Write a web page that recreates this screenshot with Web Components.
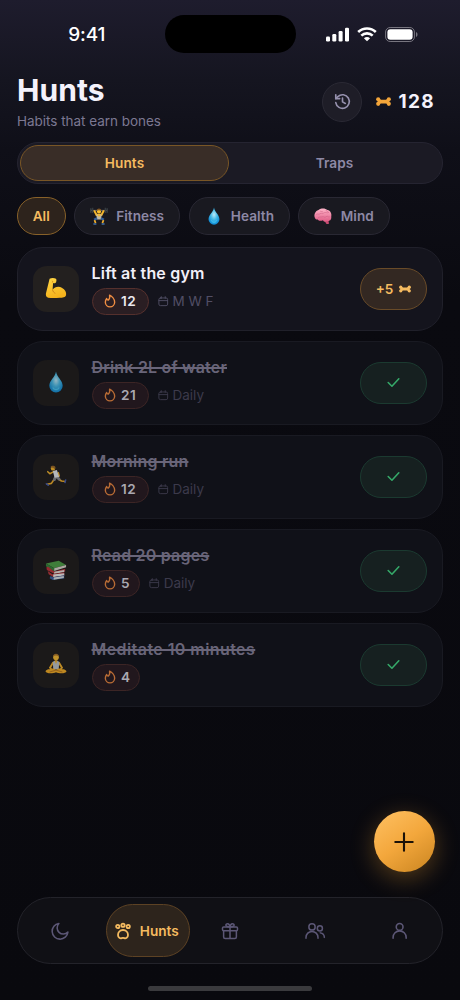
<!DOCTYPE html>
<html lang="en">
<head>
<meta charset="utf-8">
<title>Hunts</title>
<style>
html,body{margin:0;height:100%;background:#09090e}
body{font-family:Inter,"Noto Sans",sans-serif;overflow:hidden}
</style>
</head>
<body>
<hunt-app></hunt-app>
<script>
const stroke = (body, w = 2) => `<g fill="none" stroke="currentColor" stroke-width="${w}" stroke-linecap="round" stroke-linejoin="round">${body}</g>`;
const ICONS = {
  history: stroke('<path d="M2.500 13.500a9.600 9.600 0 1 0 3-8.500L2.500 8"/><path d="M2.500 2.500V8H8M12 7v5.500l4 2.200"/>', 2.3),
  bone: '<g fill="currentColor"><circle cx="3.500" cy="8.300" r="3.300"/><circle cx="3.500" cy="15.700" r="3.300"/><circle cx="20.500" cy="8.300" r="3.300"/><circle cx="20.500" cy="15.700" r="3.300"/><path d="M2.500 8h3.500l2 1h8L18 8h3.500v8H18l-2-1H8L6 16H2.500z"/></g>',
  flame: stroke('<path d="M9 10.500C11.500 8.500 12 5.500 11.300 2c4 1.800 8.700 6.800 8.700 12.200A8 8 0 0 1 12 22a8 8 0 0 1-8-7.800c0-2.400.800-4.700 2.300-6.400.300 1.500 1.200 2.500 2.700 2.700z"/>', 2.400),
  calendar: stroke('<rect x="2" y="4.500" width="20" height="17.500" rx="3.500"/><path d="M2 10.500h20M7.500 1.500v4M16.500 1.500v4"/>', 2.100),
  check: stroke('<path d="M20.500 6 9.500 18l-6-6"/>', 2.500),
  plus: stroke('<path d="M12 2.500v19M2.500 12h19"/>', 2.300),
  moon: stroke('<path d="M10.500 2a8 8 0 0 0 12 11.500A10.500 10.500 0 1 1 10.500 2z"/>', 2.100),
  paw: stroke('<circle cx="4.200" cy="5.200" r="2.500"/><circle cx="12" cy="3.400" r="2.500"/><circle cx="19.800" cy="5.200" r="2.500"/><path d="M12 10.500c-4.700 0-7.500 3.500-7.500 7.500 0 4.300 3.500 5.500 5.500 4.700 1.300-.500 2.700-.500 4 0 2 .800 5.500-.400 5.500-4.700 0-4-2.800-7.500-7.500-7.500z"/>', 2.700),
  gift: stroke('<rect x="2" y="6.500" width="20" height="5" rx="1.500"/><path d="M3.500 11.500V20a2 2 0 0 0 2 2h13a2 2 0 0 0 2-2v-8.500M12 6.500V22M12 6.500C9 6.500 6.500 6 6.500 4S11 .5 12 6.500c1-6 5.500-4.500 5.500-2.500S15 6.500 12 6.500"/>', 2),
  people: stroke('<circle cx="8" cy="6.500" r="4.200"/><path d="M0 21.500v-1a8 8 0 0 1 16 0v1"/><circle cx="18.500" cy="8.500" r="3.400"/><path d="M19 14.500a6.300 6.300 0 0 1 5.500 6"/>', 2),
  person: stroke('<circle cx="11.500" cy="6.500" r="4.500"/><path d="M2.800 21.500v-1a8.700 8.700 0 0 1 17.400 0v1"/>', 2.100),
  drop: '<defs><radialGradient id="d" cx=".5" cy=".42" r=".62"><stop stop-color="#bdebfa"/><stop offset=".45" stop-color="#48bce9"/><stop offset="1" stop-color="#0785d2"/></radialGradient></defs><path fill="url(#d)" d="M12 .5C11 7 4.700 10 4.700 16.200a7.300 7.300 0 0 0 14.600 0C19.300 10 13 7 12 .5z"/><path d="M8.500 18c1 3 6 3 7 0" stroke="#46c8f5" stroke-width="1.300" fill="none"/>',
  arm: '<defs><linearGradient id="a" x2=".3" y2="1"><stop stop-color="#ffd747"/><stop offset="1" stop-color="#f5b31c"/></linearGradient></defs><path fill="url(#a)" d="M5 2c2-1.400 5-1.300 7 0 1 1 .4 4-.600 4.600-1.200.600-2.200.200-2.600-.100l-.500 7.500c2-3 6.500-4.300 10-2.200 3.700 1.800 5.200 5.200 4.700 7.700-.5 2.600-4 3-7 3.200-4.500.3-9 .6-12.500-.2C1 22 .800 20 1 18z"/><path d="M8.300 14c.3 1.800 1.200 3 3 3.800M7.500 4c1 .6 1 1.300.5 2" fill="none" stroke="#cd8218" stroke-width="1"/>',
  lift: '<path d="M1 4.500h22" stroke="#6d7377" stroke-width="1.200"/><path d="M1 1.500v6M3.500 1v7M20.500 1v7M23 1.500v6" stroke="#343a3f" stroke-width="2"/><path d="m5.500 4.500 3.200 6h6.600l3.200-6" fill="none" stroke="#f6b72b" stroke-width="2.700"/><circle cx="12" cy="6" r="2.800" fill="#fbc02d"/><path d="M9 5c0-4 6-4 6 0-2-1-4-1-6 0" fill="#825724"/><path d="M8.500 9.500h7l-.5 7H9z" fill="#c2b9a0"/><path d="M9 9.500h6l-3 3.500z" fill="#f6b72b"/><path d="m9.500 15-4 2" stroke="#315f9e" stroke-width="3.300"/><path d="m14.500 15 4 2" stroke="#315f9e" stroke-width="3.300"/><path d="m6 17.500 1.500 4M18 17.500l-1.500 4" stroke="#f0ae2b" stroke-width="2.200"/><path d="M4.500 22.500h4M15.500 22.500h4" stroke="#3f6da4" stroke-width="2"/>',
  brain: '<defs><linearGradient id="b" x2="0" y2="1"><stop stop-color="#ffb5c9"/><stop offset="1" stop-color="#df5c86"/></linearGradient></defs><path fill="#c84b72" d="M14 17h5l1 5c-2 1.500-4 .5-4.500-1z"/><path fill="url(#b)" d="M1 14C-.5 10 2 5 6 4c4-3 9-2.500 12 0 4 .5 6 5 5 9 .5 4-2 6-6 6-2 1.200-4 .4-5-1.500-3 1.500-6 1-7-.8-2 .4-3.500-.7-4-2.700z"/><path d="M3 10c2-2 3 1 5-1s3 1 5-1 4 1 7-1M5 15c2-3 4-1 6-2s3 2 5 0 3 1 5 0M8 5c1 2 3 0 4 2m4-3c0 2 2 1 3 3" fill="none" stroke="#c8587d" stroke-width=".6"/>',
  run: '<g fill="none" stroke-linecap="round" stroke-linejoin="round"><path d="m10 15.500-3 4.500-4.500 1M15 15.500l3 2 4 .5" stroke="#f1ae27" stroke-width="1.800"/><path d="M9 7.500 5.300 9.500 3 7.300M14.500 8.500l1 3.500-3 1" stroke="#f6b62d" stroke-width="1.700"/><path d="m11.500 13-1.300 3M13 13l2.500 2.500" stroke="#85888c" stroke-width="3"/><path d="m1.500 20.500 2 1.500M22.500 16.500l-.7 2.500" stroke="#3f59ad" stroke-width="1.700"/></g><path d="M8.500 6.500 13 5.500l2.500 7.500-5 1z" fill="#e8edf0"/><circle cx="8.700" cy="3.700" r="2.400" fill="#f8b728"/><path d="M6 2.700C6 .3 11 .3 11.500 3l-1 1.500-1.500-1.500z" fill="#9d6824"/>',
  books: '<path d="m1 5 14-3 8 4.500L10 10z" fill="#4ba045"/><path d="m1 5 9 5v3.500L1 8z" fill="#34813a"/><path d="m10 10 13-3.500V9L10 13z" fill="#ddd8cf"/><path d="m1.500 9 2-.5 6.500 5 12-3v3l-12 2.500-8-4z" fill="#bd3138"/><path d="m10 14 11-2v2.300L10 16z" fill="#e6e3df"/><path d="m3 13 5 3.500 13-2V18L9 19.500l-5-3z" fill="#bf343b"/><path d="m9 17 12-1.500V18L9 19.500z" fill="#f0eeee"/><path d="m6 18.500 3 1.300 12-2v3.500L8.500 23 5 21z" fill="#375d9f"/><path d="m9.500 20.200 11-1.700v2.200L9.500 22.500z" fill="#dce2e6"/>',
  meditate: '<path d="m9 10-3.500 6 2 2.500M15 10l3.500 6-2 2.500" fill="none" stroke="#f4b22a" stroke-width="2"/><path d="M8.500 9.500q3.500-2 7 0L15 18H9z" fill="#bec6ca"/><path d="M10.300 8h3.400L12 12z" fill="#f4b22a"/><path d="M9 16.500c-4 1.500-7 .5-8.500 3.500 1 3 8.500 2.500 11.500 1 3 1.500 10.500 2 11.500-1-1.500-3-4.500-2-8.500-3.500l-3 2z" fill="#f5ad23"/><path d="m5 20.700 7-2 7 2" fill="none" stroke="#a96619" stroke-width=".8"/><circle cx="12" cy="4.700" r="3.100" fill="#f9bc32"/><path d="M8.800 3.800c0-4 6.400-4 6.400 0-2-1.300-4.400-1.300-6.400 0" fill="#a87127"/>'
};
class BaseEl extends HTMLElement {
  connectedCallback() {
    if (this.shadowRoot) return;
    this.attachShadow({mode:'open'}).innerHTML = `<style>*{box-sizing:border-box}${this.css()}</style>${this.html()}`;
  }
  a(n) { return this.getAttribute(n) || ''; }
}
const def = (name, css, html) => customElements.define(name, class extends BaseEl {
  css() { return css; }
  html() { return typeof html === 'function' ? html(this) : html; }
});

def('app-icon', ':host{display:block;flex:none;width:var(--s,20px);height:var(--s,20px)}svg{display:block;width:100%;height:100%;overflow:visible}',
  e => `<svg viewBox="0 0 24 24" aria-hidden="true">${ICONS[e.a('name')]}</svg>`);

def('status-bar', `:host{display:grid;grid-template-columns:1fr 131px 1fr;height:68px;align-items:center;color:#fff}
  .time{font-size:19px;font-weight:550;letter-spacing:-.1px;padding-left:9px;text-align:center}
  .island{height:38px;border-radius:19px;background:#000}
  .sys{display:flex;gap:8px;padding-left:30px;align-items:center}svg{display:block}`,
  `<div class="time">9:41</div><div class="island"></div><div class="sys">
  <svg width="23" height="15" viewBox="0 0 23 15" fill="#fff"><rect y="9.500" width="4" height="5" rx="1.200"/><rect x="6.300" y="7" width="4" height="7.500" rx="1.200"/><rect x="12.600" y="4" width="4" height="10.500" rx="1.200"/><rect x="19" y=".7" width="4" height="13.800" rx="1.200"/></svg>
  <svg width="20" height="15" viewBox="0 0 20 15"><g fill="none" stroke="#fff" stroke-width="2.600"><path d="M1.200 5a12.700 12.700 0 0 1 17.600 0"/><path d="M4.300 8.600a8.300 8.300 0 0 1 11.400 0"/></g><path d="m10 14.300-3.100-3a4.600 4.600 0 0 1 6.200 0z" fill="#fff"/></svg>
  <svg width="33" height="15" viewBox="0 0 33 15"><rect x=".6" y=".5" width="28.800" height="14" rx="4.500" fill="none" stroke="#77757f"/><rect x="2.400" y="2.300" width="25.200" height="10.400" rx="3" fill="#fff"/><path d="M31 5c2 .8 2 4.200 0 5z" fill="#77757f"/></svg></div>`);

def('page-header', `:host{display:flex;justify-content:space-between;padding:0 25px 0 17px;height:74.400px}
  h1{margin:4px 0 0;font-size:30px;line-height:36px;font-weight:700;letter-spacing:.05px;color:#f4f2fb}
  p{margin:4.600px 0 0;font-size:13.500px;line-height:17px;color:#7c7892;letter-spacing:-.03px}
  .right{display:flex;align-items:center;height:40px;margin-top:13.500px}
  .hist{width:40px;height:40px;border-radius:50%;background:#1e1d27;border:1px solid #2a2934;color:#9691ae;display:grid;place-items:center;margin-right:13.500px;--s:17px}
  .bone{color:#f3a53a;--s:15px;margin-right:8px}
  b{font-size:19px;line-height:20px;font-weight:700;letter-spacing:1.300px;color:#f4f2fb}`,
  `<div><h1>Hunts</h1><p>Habits that earn bones</p></div><div class="right"><div class="hist"><app-icon name="history"></app-icon></div><app-icon class="bone" name="bone"></app-icon><b>128</b></div>`);

def('segment-tabs', `:host{display:grid;grid-template-columns:209px 1fr;margin:0 17px;height:42px;padding:2px;border:1px solid #252431;border-radius:21px;background:#1b1a24;font-size:13.600px;font-weight:600;color:#8e89a6}
  div{display:grid;place-items:center;border-radius:18px;letter-spacing:.1px}
  .on{border:1px solid #795626;background:#392d27;color:#f5bb60}`,
  '<div class="on">Hunts</div><div>Traps</div>');

def('filter-chip', `:host{display:flex;align-items:center;height:38px;border-radius:19px;border:1px solid #292833;background:#191920;color:#8d88a5;font-size:13.600px;font-weight:600;gap:8.300px;padding:0 15px;letter-spacing:.04px;--s:18px}
  :host([on]){background:#2d231c;border-color:#886129;color:#f5bb60;padding:0 14.700px}`,
  e => (e.a('icon') ? `<app-icon name="${e.a('icon')}"></app-icon>` : '') + '<slot></slot>');

def('habit-card', `:host{display:flex;align-items:center;height:84px;border:1px solid #20202a;border-radius:26px;background:#14141d;padding:0 15px}
  :host([done]){background:#101118;border-color:#191a22}
  .pic{width:46px;height:46px;border-radius:14px;background:#23201f;display:grid;place-items:center;margin-right:12.500px;padding:0 1px 1px 0;--s:22px}
  :host([done]) .pic{background:#1b1919}
  :host([done]) .pic app-icon{opacity:.75}
  .mid{flex:1;height:52px}
  .t{font-size:16px;line-height:21px;font-weight:600;color:#f1eff8;letter-spacing:var(--ls,.200px);white-space:nowrap;width:max-content}
  :host([done]) .t{color:#696579;text-decoration:line-through;text-decoration-thickness:1.500px}
  .meta{display:flex;gap:9px;align-items:center;margin-top:4px}
  .streak{display:flex;align-items:center;height:27px;border-radius:14px;border:1px solid #55302d;background:#2a1e23;padding:0 9.500px 0 10px;gap:4.500px;color:#f08e43;--s:14px}
  .streak b{font-size:13.600px;font-weight:600;letter-spacing:.500px;color:#eae8ef;box-sizing:border-box;width:17.500px}
  .streak.one b{width:8.700px;letter-spacing:0}
  :host([done]) .streak{background:#21171d;border-color:#3c2525;color:#b96c35}
  :host([done]) .streak b{color:#aaa8b1}
  .when{display:flex;align-items:center;gap:4px;font-size:13.500px;color:#514e65;--s:10.500px}
  :host([done]) .when{color:#3c3a4b}
  .act{width:67px;height:42px;border-radius:21px;border:1px solid #694b28;background:#332822;color:#f5bb60;display:flex;align-items:center;justify-content:center;gap:6px;font-size:13.600px;font-weight:600;--s:12px}
  :host([done]) .act{background:#162020;border-color:#1b3a30;color:#35a969;--s:15px}`,
  e => `<div class="pic"><app-icon name="${e.a('icon')}"></app-icon></div><div class="mid"><div class="t"><slot></slot></div><div class="meta"><div class="streak${e.a('streak').length < 2 ? ' one' : ''}"><app-icon name="flame"></app-icon><b>${e.a('streak')}</b></div>${e.a('when') ? `<div class="when"><app-icon name="calendar"></app-icon><span>${e.a('when')}</span></div>` : ''}</div></div><div class="act">${e.hasAttribute('done') ? '<app-icon name="check"></app-icon>' : '<span>+5</span><app-icon name="bone"></app-icon>'}</div>`);

def('add-button', `:host{position:absolute;left:374px;top:811px;width:61px;height:61px;border-radius:50%;background:linear-gradient(145deg,#ffc163,#f3a73c 50%,#c98420);box-shadow:0 6px 24px rgba(245,166,50,.32);color:#1c1208;display:grid;place-items:center;padding:0 1px 0 0;box-sizing:border-box;--s:22px}`,
  '<app-icon name="plus"></app-icon>');

def('nav-bar', `:host{display:grid;grid-template-columns:repeat(5,minmax(0,1fr));margin:0 17px;height:67px;border:1px solid #23232a;border-radius:34px;background:#101015;color:#5c5776;align-items:center;justify-items:center;--s:18px}
  .on{display:flex;align-items:center;justify-content:center;gap:8.500px;width:84px;height:53px;margin:0 -2.800px 0 2.800px;padding-right:2px;border-radius:27px;border:1px solid #5d4224;background:#2d241c;color:#f5bb60;font-size:13.600px;font-weight:600;--s:16px}`,
  '<app-icon name="moon"></app-icon><div class="on"><app-icon name="paw"></app-icon><span>Hunts</span></div><app-icon name="gift"></app-icon><app-icon name="people"></app-icon><app-icon name="person"></app-icon>');

def('hunt-app', `:host{display:flex;flex-direction:column;width:460px;height:1000px;position:relative;overflow:hidden;background:linear-gradient(180deg,#1e1c2d 0,#151520 80px,#0f0f18 150px,#0a0a10 300px,#09090e 100%)}
  .chips{display:flex;gap:8.400px;margin:12.600px 17px 12px}
  .list{display:flex;flex-direction:column;gap:10px;margin:0 17px;flex:1}
  .home{width:164px;height:5px;border-radius:3px;background:#3a3a3d;margin:22px auto 9px}`,
  `<status-bar></status-bar><page-header></page-header><segment-tabs></segment-tabs>
  <div class="chips"><filter-chip on>All</filter-chip><filter-chip icon="lift">Fitness</filter-chip><filter-chip icon="drop">Health</filter-chip><filter-chip icon="brain">Mind</filter-chip></div>
  <div class="list">
  <habit-card icon="arm" streak="12" when="M W F">Lift at the gym</habit-card>
  <habit-card done icon="drop" streak="21" when="Daily">Drink 2L of water</habit-card>
  <habit-card done icon="run" streak="12" when="Daily">Morning run</habit-card>
  <habit-card done icon="books" streak="5" when="Daily">Read 20 pages</habit-card>
  <habit-card done icon="meditate" streak="4" style="--ls:.430px">Meditate 10 minutes</habit-card></div>
  <add-button></add-button><nav-bar></nav-bar><div class="home"></div>`);
</script>
</body>
</html>
